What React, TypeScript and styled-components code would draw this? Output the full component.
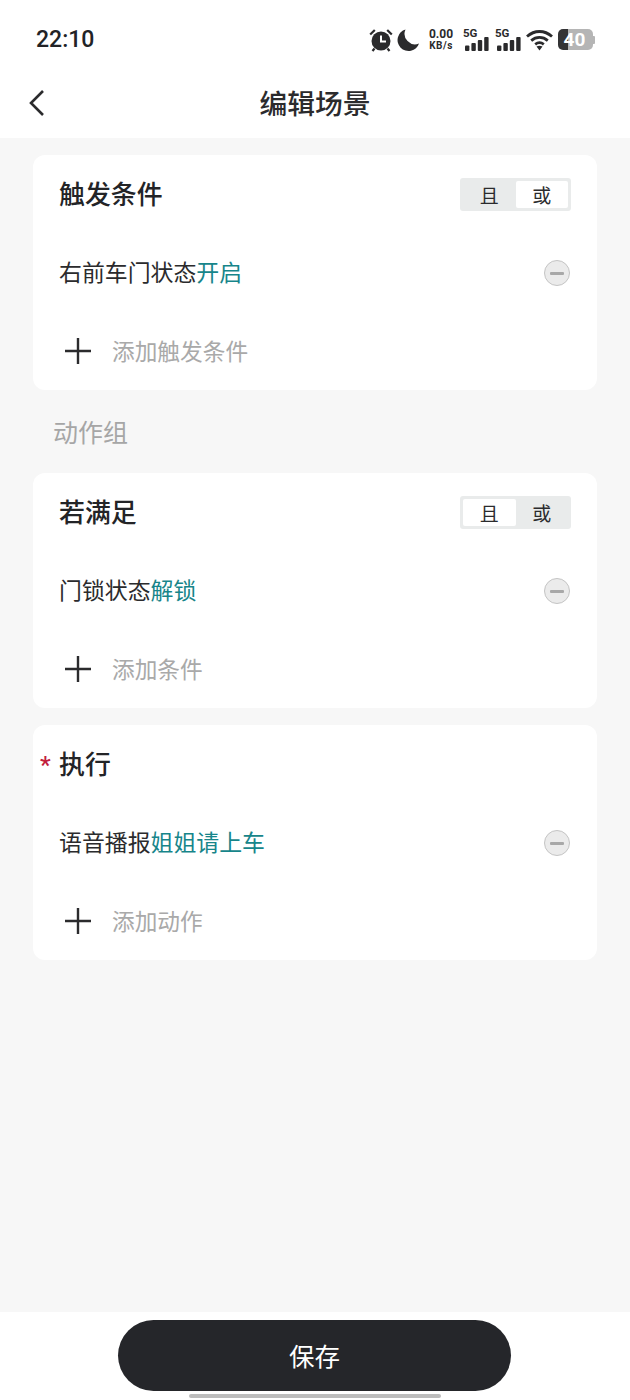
import * as React from 'react';
import styled, { createGlobalStyle } from 'styled-components';

const GlobalStyle = createGlobalStyle`
  html, body {
    margin: 0;
    padding: 0;
    background: #f7f7f7;
    font-family: "Roboto", "Noto Sans CJK SC", sans-serif;
  }
  * { box-sizing: border-box; }
`;

const Page = styled.div`
  position: relative;
  width: 630px;
  height: 1400px;
  display: flex;
  flex-direction: column;
  background: #f7f7f7;
  overflow: hidden;
`;

const Top = styled.header`
  height: 138px;
  background: #fff;
  flex: none;
`;

const StatusBar = styled.div`
  height: 70px;
  padding: 9px 35px 0 36px;
  display: flex;
  align-items: center;
  justify-content: space-between;
`;

const Time = styled.span`
  font-size: 23px;
  font-weight: 500;
  color: #222326;
`;

const StatusIcons = styled.div`
  display: flex;
  align-items: center;
`;

const Speed = styled.div`
  width: 26px;
  margin: 0 9px 0 8px;
  display: flex;
  flex-direction: column;
  align-items: center;
  font-size: 12px;
  line-height: 12px;
  font-weight: 700;
  color: #2a2a2c;
  white-space: nowrap;
`;

const SpeedUnit = styled.span`
  font-size: 10px;
  line-height: 11px;
  letter-spacing: 0.5px;
`;

const Signal = styled.div<{ $gap: number }>`
  position: relative;
  width: 26px;
  height: 22px;
  margin-right: ${({ $gap }) => $gap}px;
`;

const SignalLabel = styled.span`
  position: absolute;
  left: 0;
  top: -2px;
  font-size: 11.5px;
  line-height: 12px;
  font-weight: 700;
  color: #2a2a2c;
`;

const SignalBars = styled.svg`
  position: absolute;
  left: 2px;
  bottom: 0;
`;

const Battery = styled.div`
  width: 35px;
  height: 21px;
  margin-left: 5px;
  border-radius: 5px;
  overflow: hidden;
  background: linear-gradient(to right, #333335 0 10px, #b5b5b5 10px);
  display: flex;
  align-items: center;
  justify-content: center;
  padding-right: 2px;
  font-size: 19px;
  font-weight: 700;
  color: #fff;
`;

const BatteryTip = styled.div`
  width: 2px;
  height: 8px;
  background: #b5b5b5;
  border-radius: 0 1px 1px 0;
`;

const NavBar = styled.div`
  position: relative;
  height: 68px;
  display: flex;
  align-items: center;
  justify-content: center;
`;

const BackButton = styled.button`
  position: absolute;
  left: 27px;
  top: 18px;
  width: 20px;
  height: 30px;
  border: 0;
  padding: 0;
  background: none;
  display: flex;
`;

const NavTitle = styled.h1`
  margin: 0;
  padding-top: 1px;
  font-size: 27.8px;
  line-height: 1;
  font-weight: 500;
  color: #2b2b2d;
`;

const Main = styled.main`
  flex: 1;
  padding: 17px 33px 0;
  display: flex;
  flex-direction: column;
`;

const Card = styled.section<{ $gap?: number }>`
  height: 235px;
  margin-bottom: ${({ $gap }) => $gap ?? 0}px;
  padding: 0 27px 0 26px;
  background: #fff;
  border-radius: 12px;
  display: flex;
  flex-direction: column;
`;

const CardHeader = styled.div`
  position: relative;
  height: 80px;
  display: flex;
  align-items: center;
  justify-content: space-between;
`;

const CardTitle = styled.h2`
  margin: 0;
  padding-top: 3px;
  font-size: 25.9px;
  line-height: 1;
  font-weight: 500;
  color: #232427;
`;

const Required = styled.span`
  position: absolute;
  left: -19px;
  top: 28px;
  font-size: 24px;
  line-height: 24px;
  font-weight: 500;
  color: #c2203c;
`;

const Toggle = styled.div`
  width: 111px;
  height: 33px;
  margin-right: -1px;
  padding: 3px;
  background: #e9ebeb;
  border-radius: 3px;
  display: flex;
`;

const ToggleItem = styled.span<{ $active: boolean }>`
  flex: 1;
  border-radius: 2px;
  display: flex;
  align-items: center;
  justify-content: center;
  font-size: 19px;
  color: #2b2b2d;
  background: ${({ $active }) => ($active ? '#fff' : 'transparent')};
`;

const ItemRow = styled.div`
  height: 78px;
  display: flex;
  align-items: center;
  justify-content: space-between;
`;

const ItemText = styled.span`
  padding-top: 2px;
  font-size: 22.9px;
  line-height: 1;
  color: #2b2b2d;
`;

const Value = styled.span`
  color: #17858a;
`;

const RemoveIcon = styled.span`
  width: 26px;
  height: 26px;
  border: 1.5px solid #c4c4c4;
  border-radius: 50%;
  background: #ebebeb;
  display: flex;
  align-items: center;
  justify-content: center;
  &::before {
    content: '';
    width: 14px;
    height: 2.5px;
    border-radius: 1px;
    background: #a8a8a8;
  }
`;

const AddRow = styled.div`
  height: 78px;
  display: flex;
  align-items: center;
  gap: 21px;
`;

const PlusIcon = styled.svg`
  margin-left: 6px;
`;

const AddText = styled.span`
  padding-top: 4px;
  font-size: 22.7px;
  line-height: 1;
  color: #a9a9a9;
`;

const GroupLabel = styled.div`
  height: 83px;
  padding: 0 0 2px 20px;
  display: flex;
  align-items: center;
  font-size: 25px;
  color: #a6a6a6;
`;

const Footer = styled.footer`
  height: 88px;
  flex: none;
  padding: 8px 1px 0 0;
  background: #fff;
  display: flex;
  justify-content: center;
`;

const SaveButton = styled.button`
  width: 393px;
  height: 71px;
  padding: 0 0 2px;
  border: 0;
  border-radius: 36px;
  background: #25262a;
  color: #fff;
  font-family: inherit;
  font-size: 25.5px;
`;

const HomeBar = styled.div`
  position: absolute;
  left: 189px;
  bottom: 2px;
  width: 252px;
  height: 4px;
  border-radius: 2px;
  background: #bcbcbc;
`;

const AlarmIcon = () => (
  <svg width="24" height="24" viewBox="0 0 24 24">
    <circle cx="12" cy="13" r="9.5" fill="#2a2a2c" />
    <path d="M1.2 6.5 5.8 2M22.8 6.5 18.2 2M5.5 20.5 3.5 23M18.5 20.5l2 2.5" stroke="#2a2a2c" strokeWidth="2.2" fill="none" />
    <path d="M12 7.5V13.5H17" stroke="#fff" strokeWidth="2" fill="none" />
  </svg>
);

const MoonIcon = () => (
  <svg width="24" height="24" viewBox="0 0 24 24" style={{ marginLeft: 3 }}>
    <path d="M9.5 1.5A11 11 0 1 0 23 15.5 10.5 10.5 0 0 1 9.5 1.5Z" fill="#2a2a2c" />
  </svg>
);

const Bars = () => (
  <SignalBars width="24" height="14" viewBox="0 0 24 14">
    <rect x="0" y="8.5" width="4.4" height="5.5" rx="1" fill="#2a2a2c" />
    <rect x="6.4" y="6" width="4.4" height="8" rx="1" fill="#2a2a2c" />
    <rect x="12.8" y="3" width="4.4" height="11" rx="1" fill="#2a2a2c" />
    <rect x="19.2" y="0" width="4.4" height="14" rx="1" fill="#2a2a2c" />
  </SignalBars>
);

const WifiIcon = () => (
  <svg width="27" height="22" viewBox="0 0 27 22">
    <path d="M1 7.5C8.5 .8 18.5 .8 26 7.5M5.2 11.6C10.2 7.4 16.8 7.4 21.8 11.6M9.2 15.3C11.8 13.3 15.2 13.3 17.8 15.3" stroke="#2a2a2c" strokeWidth="2.8" fill="none" />
    <path d="M10.5 17.6 13.5 21.5 16.5 17.6C14.6 16.6 12.4 16.6 10.5 17.6Z" fill="#2a2a2c" />
  </svg>
);

const Plus = () => (
  <PlusIcon width="26" height="26" viewBox="0 0 26 26">
    <path d="M0 13H26M13 0V26" stroke="#2b2b2d" strokeWidth="2.4" />
  </PlusIcon>
);

interface ICardProps {
  title: string;
  required?: boolean;
  mode?: 'and' | 'or';
  label: string;
  value: string;
  addText: string;
  gap?: number;
}

const SceneCard: React.FC<ICardProps> = ({ title, required, mode, label, value, addText, gap }) => (
  <Card $gap={gap}>
    <CardHeader>
      {required && <Required>*</Required>}
      <CardTitle>{title}</CardTitle>
      {mode && (
        <Toggle>
          <ToggleItem $active={mode === 'and'}>且</ToggleItem>
          <ToggleItem $active={mode === 'or'}>或</ToggleItem>
        </Toggle>
      )}
    </CardHeader>
    <ItemRow>
      <ItemText>
        {label}
        <Value>{value}</Value>
      </ItemText>
      <RemoveIcon />
    </ItemRow>
    <AddRow>
      <Plus />
      <AddText>{addText}</AddText>
    </AddRow>
  </Card>
);

const App = () => (
  <Page>
    <GlobalStyle />
    <Top>
      <StatusBar>
        <Time>22:10</Time>
        <StatusIcons>
          <AlarmIcon />
          <MoonIcon />
          <Speed>
            0.00
            <SpeedUnit>KB/s</SpeedUnit>
          </Speed>
          <Signal $gap={6}>
            <SignalLabel>5G</SignalLabel>
            <Bars />
          </Signal>
          <Signal $gap={5}>
            <SignalLabel>5G</SignalLabel>
            <Bars />
          </Signal>
          <WifiIcon />
          <Battery>40</Battery>
          <BatteryTip />
        </StatusIcons>
      </StatusBar>
      <NavBar>
        <BackButton>
          <svg width="20" height="30" viewBox="0 0 20 30">
            <path d="M16 3 4 15l12 12" stroke="#2b2b2d" strokeWidth="2.6" fill="none" />
          </svg>
        </BackButton>
        <NavTitle>编辑场景</NavTitle>
      </NavBar>
    </Top>
    <Main>
      <SceneCard title="触发条件" mode="or" label="右前车门状态" value="开启" addText="添加触发条件" />
      <GroupLabel>动作组</GroupLabel>
      <SceneCard title="若满足" mode="and" label="门锁状态" value="解锁" addText="添加条件" gap={17} />
      <SceneCard title="执行" required label="语音播报" value="姐姐请上车" addText="添加动作" />
    </Main>
    <Footer>
      <SaveButton>保存</SaveButton>
    </Footer>
    <HomeBar />
  </Page>
);

export default App;
